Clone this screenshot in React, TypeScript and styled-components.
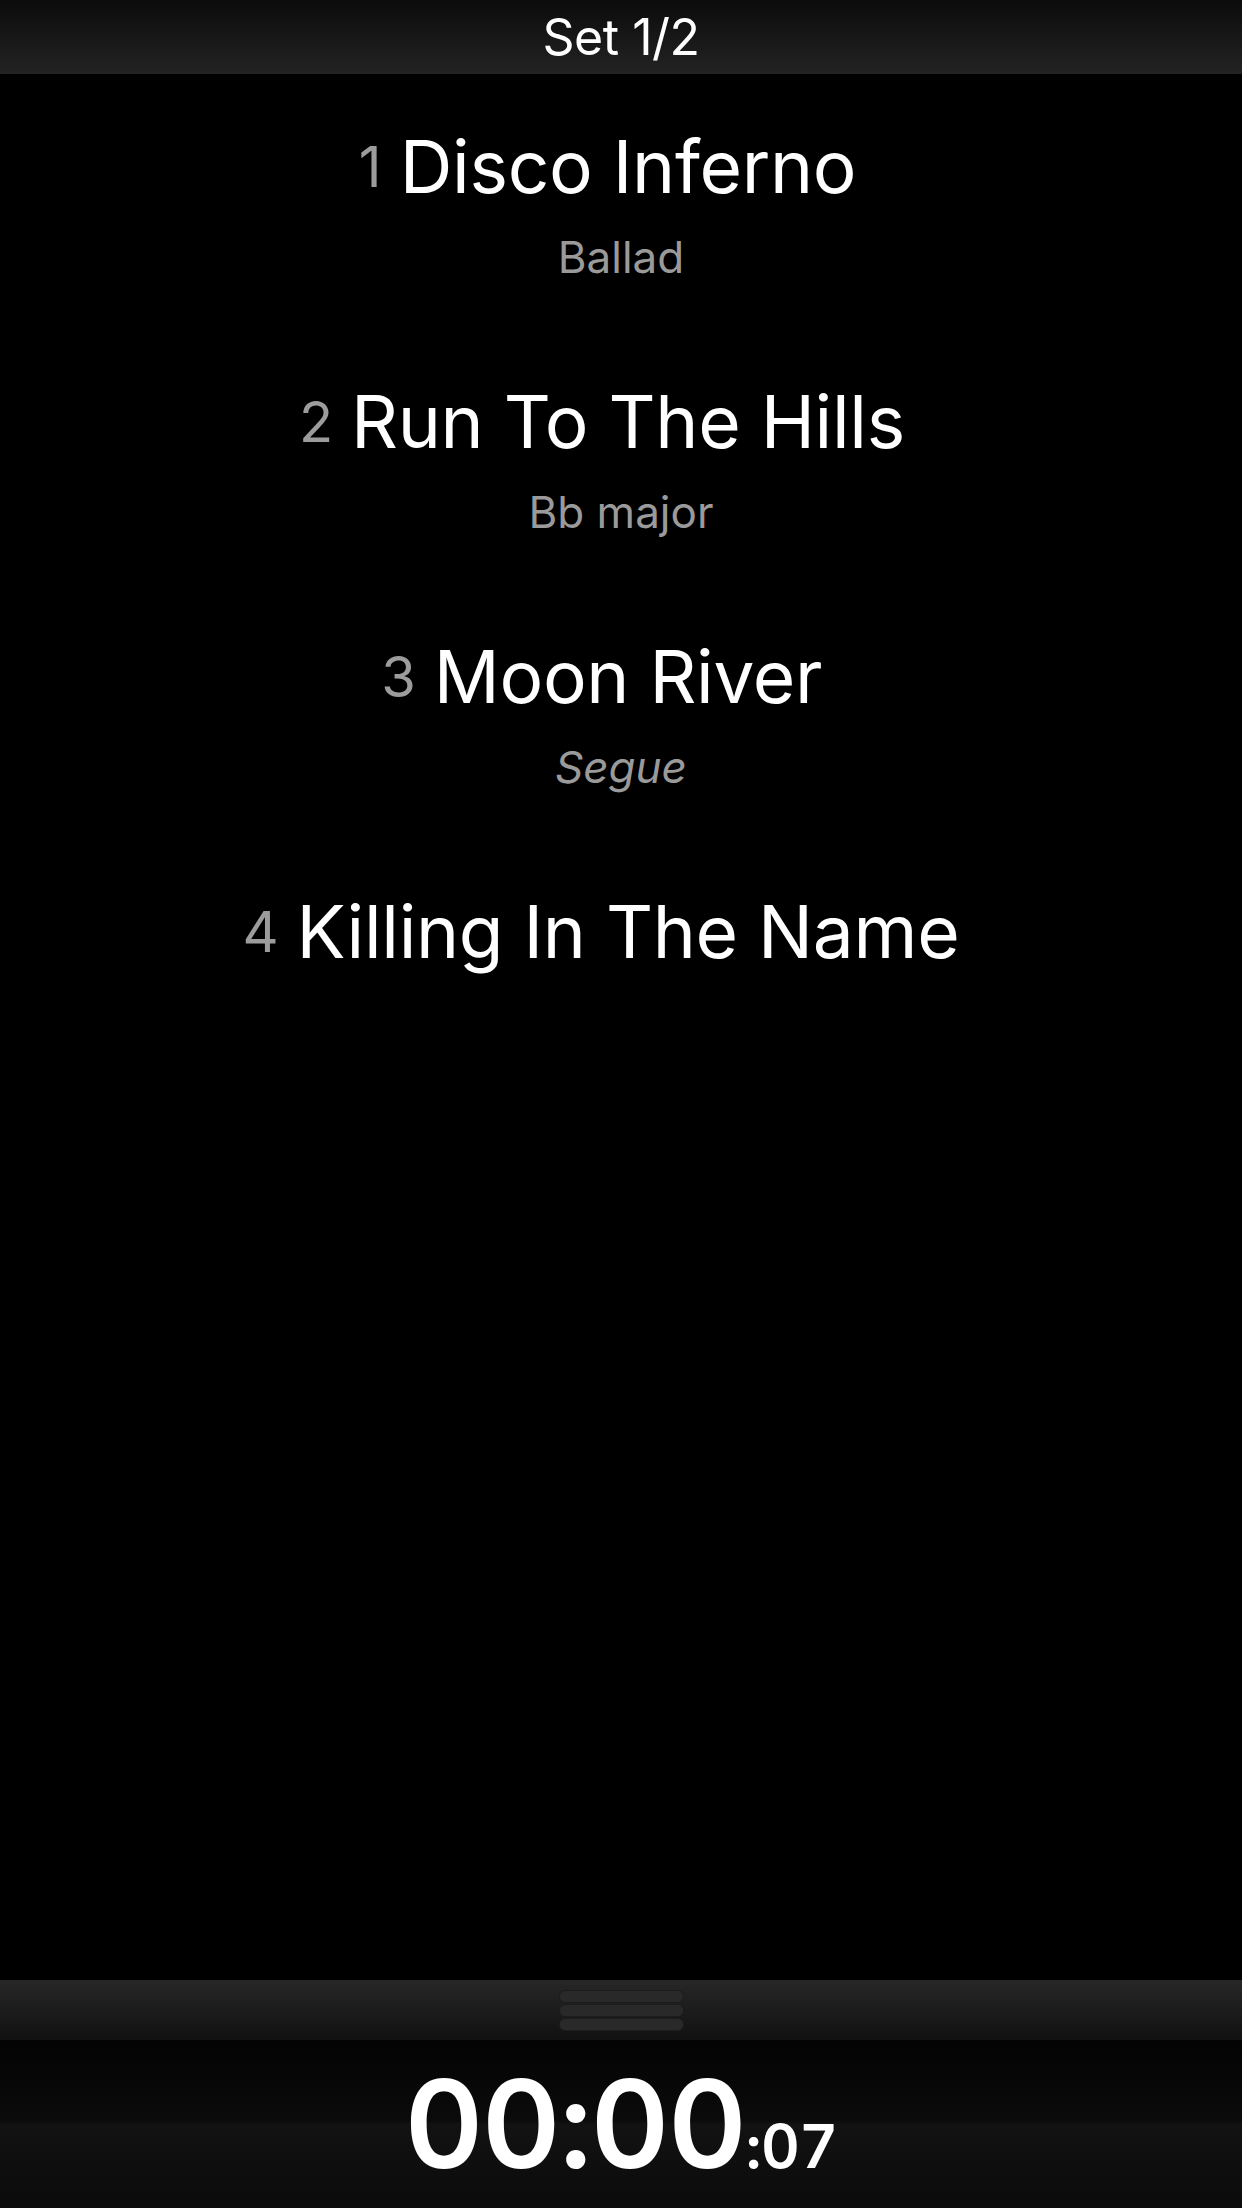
import React from "react";
import styled, { createGlobalStyle } from "styled-components";

const Global = createGlobalStyle`
  html, body { margin: 0; padding: 0; background: #000; }
  body { font-family: Inter, "Noto Sans", "Liberation Sans", sans-serif; color: #fff; }
  * { box-sizing: border-box; }
`;

const Screen = styled.div`
  display: flex;
  flex-direction: column;
  width: 1242px;
  height: 2208px;
  background: #000;
  overflow: hidden;
`;

const TopBar = styled.header`
  height: 74px;
  flex: none;
  display: flex;
  align-items: center;
  justify-content: center;
  background: linear-gradient(#0b0b0b, #232323);
`;

const TopTitle = styled.div`
  font-size: 50px;
  line-height: 1;
  font-weight: 400;
  letter-spacing: -0.5px;
  color: #fff;
`;

const SongList = styled.main`
  flex: 1;
  display: flex;
  flex-direction: column;
  padding-top: 56px;
`;

const Row = styled.div`
  height: 255px;
  flex: none;
  display: flex;
  flex-direction: column;
  align-items: center;
`;

const TitleLine = styled.div`
  width: 100%;
  display: grid;
  grid-template-columns: 1fr auto 1fr;
  align-items: center;
  column-gap: 18px;
  padding-left: 14px;
`;

const Num = styled.span`
  justify-self: end;
  font-size: 56px;
  line-height: 1;
  color: #9c9c9c;
`;

const Title = styled.span`
  font-size: 73px;
  line-height: 1;
  color: #fff;
  letter-spacing: -0.3px;
  white-space: nowrap;
`;

const Sub = styled.div<{ $italic?: boolean }>`
  margin-top: 32px;
  font-size: 44px;
  line-height: 1;
  color: #9a9a9a;
  font-style: ${(p) => (p.$italic ? "italic" : "normal")};
`;

const HandleStrip = styled.div`
  height: 60px;
  flex: none;
  display: flex;
  flex-direction: column;
  align-items: center;
  justify-content: center;
  gap: 3px;
  background: linear-gradient(#272727, #111);
`;

const HandleBar = styled.div`
  width: 123px;
  height: 11px;
  border-radius: 5px;
  background: #292929;
  box-shadow: 0 0 0 1px #1c1c1c;
`;

const TimerPanel = styled.footer`
  height: 168px;
  flex: none;
  display: flex;
  align-items: center;
  justify-content: center;
  background: linear-gradient(#030303 0%, #0b0b0b 48%, #121212 50%, #0b0b0b 100%);
`;

const Timer = styled.div`
  font-size: 122px;
  line-height: 1;
  font-weight: 600;
  letter-spacing: -1.5px;
  color: #fff;
  font-variant-numeric: tabular-nums;
`;

const TimerSmall = styled.span`
  font-size: 60px;
  letter-spacing: -0.5px;
`;

const songs: { n: number; title: string; sub?: string; italic?: boolean }[] = [
  { n: 1, title: "Disco Inferno", sub: "Ballad" },
  { n: 2, title: "Run To The Hills", sub: "Bb major" },
  { n: 3, title: "Moon River", sub: "Segue", italic: true },
  { n: 4, title: "Killing In The Name" },
];

export default function App() {
  return (
    <>
      <Global />
      <Screen>
        <TopBar>
          <TopTitle>Set 1/2</TopTitle>
        </TopBar>
        <SongList>
          {songs.map((s) => (
            <Row key={s.n}>
              <TitleLine>
                <Num>{s.n}</Num>
                <Title>{s.title}</Title>
                <span />
              </TitleLine>
              {s.sub && <Sub $italic={s.italic}>{s.sub}</Sub>}
            </Row>
          ))}
        </SongList>
        <HandleStrip>
          <HandleBar />
          <HandleBar />
          <HandleBar />
        </HandleStrip>
        <TimerPanel>
          <Timer>
            00:00<TimerSmall>:07</TimerSmall>
          </Timer>
        </TimerPanel>
      </Screen>
    </>
  );
}
